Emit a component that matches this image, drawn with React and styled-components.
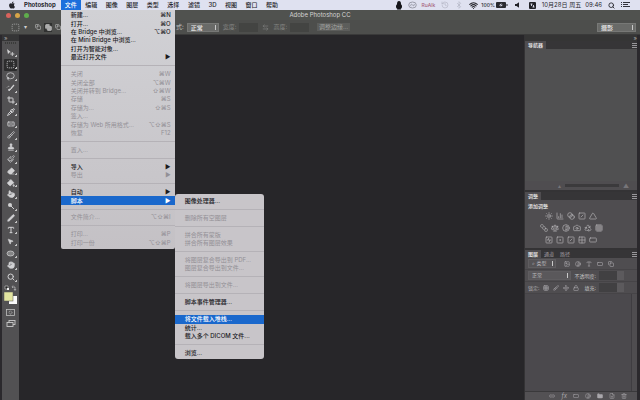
import React from 'react';
import styled, { createGlobalStyle, css } from 'styled-components';
import {
  Sun, ChartColumn, Blend, SquareSlash, Triangle, SquareStack, Scale, Contrast, Camera, Recycle, Grid3x3,
  SquareActivity, SquareDot, Image, Type, RectangleHorizontal, Lock, Brush, Move, Link2, Folder, Trash2,
  FilePlus, SquareDashed, Lasso, Crop, Pipette, Bandage, Paintbrush, Stamp, History, Eraser,
  PaintBucket, Pointer, Pen, Hand, Search, Wifi, Bluetooth, ArrowLeftRight, Copy, MousePointer2, Grid2x2,
} from 'lucide-react';
import { FaApple } from 'react-icons/fa';

const GlobalStyle = createGlobalStyle`
  * { box-sizing: border-box; }
  body {
    margin: 0;
    background: #272628;
    color: #d4d4d4;
    font: 6px/8px Inter, "Noto Sans CJK SC", sans-serif;
    overflow: hidden;
  }
  button, input, select { font: inherit; color: inherit; margin: 0; padding: 0; border: 0; }
  button { background: none; text-align: left; white-space: nowrap; }
  ul { margin: 0; padding: 0; list-style: none; }
  svg { display: block; flex: none; }
`;

const Screen = styled.div`
  display: flex;
  flex-direction: column;
  min-height: 100vh;
`;

/* system menu bar */

const MenuBar = styled.header`
  display: flex;
  align-items: center;
  height: 10px;
  padding: 0 10px 0 8px;
  background: #dfe1f0;
  color: #26262c;
  white-space: nowrap;
`;

const AppName = styled.strong`
  margin: 0 5px 0 8px;
  font-weight: 700;
`;

const Nav = styled.nav`
  display: flex;
  width: 222px;
`;

const NavItem = styled.div`
  position: relative;
  flex: 1 0 auto;
`;

const NavButton = styled.button`
  display: block;
  width: 100%;
  height: 10px;
  padding: 0 4px;
  font-weight: 500;
  ${({ $open }) => $open && css`
    background: #1c6fdc;
    color: #fff;
  `}
`;

const Status = styled.div`
  display: flex;
  align-items: center;
  gap: 6px;
  margin-left: auto;
`;

const StatusGroup = styled.div`
  display: flex;
  align-items: center;
  gap: ${({ $gap }) => $gap || 4}px;
`;

const Small = styled.span`
  color: ${({ $color }) => $color};
  font-size: 5px;
  font-weight: 500;
`;

/* drop-down menus */

const Menu = styled.ul`
  position: absolute;
  z-index: 2;
  top: 100%;
  left: 0;
  display: grid;
  grid-auto-rows: 1fr;
  width: 114px;
  min-height: 239px;
  padding: 1px 0 2px;
  background: linear-gradient(#d1d1d5, #c4c1c5);
  border-radius: 0 0 2px 2px;
  color: #1c1b1f;
`;

const SubMenu = styled(Menu)`
  top: -2px;
  left: 100%;
  width: 89px;
  min-height: 165px;
  padding: 2px 0;
  background: #c8c5c9;
  border-radius: 3px;
`;

const MenuRow = styled.li`
  position: relative;
  display: grid;
  min-height: 8px;
`;

const Divider = styled.li`
  align-self: center;
  height: 1px;
  background: #b5b2b7;
`;

const MenuButton = styled.button`
  display: flex;
  justify-content: space-between;
  align-items: center;
  padding: 0 4px 0 10px;
  font-weight: 500;
  &:disabled { color: #939096; font-weight: 400; }
  ${({ $active }) => $active && css`
    background: #1a68cc;
    color: #fff;
  `}
`;

/* photoshop window */

const TitleBar = styled.h1`
  margin: 0;
  padding: 1px 0;
  background: #50524f;
  font-size: 6px;
  font-weight: 400;
  text-align: center;
  position: relative;
`;

const Lights = styled.div`
  position: absolute;
  top: 3px;
  left: 6px;
  display: flex;
  gap: 4px;
`;

const Light = styled.i`
  width: 5px;
  height: 5px;
  border-radius: 50%;
  background: ${({ $color }) => $color};
`;

const OptionsBar = styled.div`
  display: flex;
  align-items: center;
  height: 15px;
  padding: 0 4px 0 11px;
  background: #4d4e4c;
  border-bottom: 1px solid #3a3a3a;
  color: #d0d0d0;
`;

const ToolOptions = styled.div`
  display: flex;
  align-items: center;
  gap: 4px;
  width: 165px;
`;

const OptionGroup = styled.div`
  display: flex;
  gap: 2px;
  padding-left: 3px;
`;

const Option = styled.button`
  display: grid;
  place-items: center;
  width: 8px;
  height: 9px;
  background: ${({ $on }) => ($on ? '#303130' : 'transparent')};
`;

const Fields = styled.div`
  display: flex;
  align-items: center;
  gap: 4px;
`;

const Field = styled.label`
  display: flex;
  align-items: center;
  gap: 3px;
  color: ${({ $dim }) => ($dim ? '#858684' : '#c4c4c4')};
  white-space: nowrap;
`;

const TextBox = styled.input`
  width: 19px;
  height: 9px;
  background: #434442;
`;

const Select = styled.select`
  appearance: none;
  width: ${({ $width }) => $width}px;
  height: 9px;
  padding-left: 3px;
  border: 1px solid #777876;
  background: linear-gradient(to left, #c9c9c9 1px, transparent 1px) no-repeat calc(100% - 2px) 50% / 2px 5px,
    ${({ $fill }) => $fill || '#696a68'};
  color: #eee;
  font-weight: 500;
  line-height: 7px;
`;

const WorkspaceSelect = styled(Select)`
  margin-left: auto;
`;

const EdgeButton = styled.button`
  width: 33px;
  height: 8px;
  margin-left: 8px;
  background: #5c5d5b;
  color: #a2a3a1;
  text-align: center;
`;

const Workspace = styled.div`
  display: flex;
  flex: 1;
  padding: 0 3px 0 2px;
  background: #2b292d;
`;

const Toolbar = styled.aside`
  width: 17px;
  background: #525153;
`;

const ToolHeader = styled.div`
  height: 6px;
  padding-left: 2px;
  background: #353536;
  color: #aaa;
  line-height: 5px;
`;

const Grip = styled.div`
  height: 2px;
  margin: 1px 3px 3px;
  background: repeating-linear-gradient(90deg, #3a3a3a 0 1px, #515151 1px 2px);
`;

const Tools = styled.div`
  display: grid;
  grid-auto-rows: 1fr;
  min-height: 236px;
`;

const Tool = styled.button`
  display: grid;
  place-items: center;
  margin: 0 2px;
  color: #d2d2d4;
  border-radius: 1px;
  background: linear-gradient(135deg, transparent 50%, #c4c4c4 50%) no-repeat 100% 85% / 2px 2px
    ${({ $on }) => ($on ? ', #2c2c2d' : '')};
`;

const ColorTools = styled.div`
  display: grid;
  justify-items: center;
  gap: 4px;
  padding-top: 1px;
`;

const Canvas = styled.main`
  flex: 1;
  background: #272629;
`;

const Panels = styled.aside`
  display: flex;
  flex-direction: column;
  width: 113px;
  padding-left: 1px;
  background: #343335;
`;

const PanelTop = styled.div`
  height: 6px;
  background: #353535;
  color: #aaa;
  line-height: 5px;
  text-align: right;
`;

const Panel = styled.section`
  display: flex;
  flex-direction: column;
  flex: ${({ $grow }) => ($grow ? '1' : 'none')};
  margin-bottom: ${({ $last }) => ($last ? 0 : 2)}px;
  background: #4f4d50;
`;

const Tabs = styled.div`
  display: flex;
  align-items: center;
  height: 8px;
  background: #363537;
`;

const Tab = styled.button`
  padding: 0 3px;
  height: 8px;
  background: ${({ $on }) => ($on ? '#4f4d50' : 'transparent')};
  color: ${({ $on }) => ($on ? '#eee' : '#a19fa3')};
  font-size: 5px;
  font-weight: ${({ $on }) => ($on ? 500 : 400)};
`;

const PanelMenu = styled.button`
  width: 5px;
  height: 5px;
  margin-left: auto;
  background: repeating-linear-gradient(#99979b 0 1px, transparent 1px 2px);
`;

const Preview = styled.div`
  height: 132px;
  background: #505051;
`;

const ZoomRow = styled.label`
  display: flex;
  justify-content: flex-end;
  align-items: center;
  gap: 4px;
  height: 9px;
  padding-right: 8px;
  color: #777579;
`;

const ZoomSlider = styled.input`
  appearance: none;
  width: 54px;
  height: 3px;
  background: #3b3a3c;
  &::-webkit-slider-thumb { appearance: none; }
`;

const AddTitle = styled.h2`
  margin: 2px 3px;
  font-size: 5px;
  font-weight: 500;
  color: #eee;
`;

const Adjustments = styled.div`
  display: grid;
  justify-items: center;
  gap: 4px;
  padding: 0 20px 4px 0;
`;

const IconRow = styled.div`
  display: flex;
  gap: ${({ $gap }) => $gap || 3}px;
  color: #b5b3b7;
`;

const IconButton = styled.button`
  display: grid;
  place-items: center;
`;

const LayerRow = styled.div`
  display: flex;
  align-items: center;
  gap: 4px;
  height: 12px;
  padding: 0 13px 0 3px;
  border-bottom: 1px solid #464447;
  color: #aeacb0;
  font-size: 5px;
  white-space: nowrap;
`;

const LayerIcons = styled(IconRow)`
  padding-left: ${({ $indent }) => $indent || 0}px;
`;

const LayerField = styled(Field)`
  margin-left: auto;
  input {
    width: 25px;
    background: linear-gradient(90deg, #414042 18px, #5c5a5d 18px);
  }
`;

const LayerSelect = styled(Select)`
  border-color: #5f5d60;
  color: #bcbabe;
  font-weight: 400;
`;

const LayerList = styled.div`
  flex: 1;
  margin-right: 5px;
  background: #4b494d;
  border-right: 1px solid #3f3d41;
`;

const LayerFooter = styled.div`
  display: flex;
  justify-content: flex-end;
  align-items: center;
  gap: 6px;
  height: 9px;
  padding-right: 10px;
  border-top: 1px solid #3a393b;
  background: #535154;
  color: #a9a7ab;
`;

const fileItems = [
  { text: '新建...', keys: '⌘N' },
  { text: '打开...', keys: '⌘O' },
  { text: '在 Bridge 中浏览...', keys: '⌥⌘O' },
  { text: '在 Mini Bridge 中浏览...' },
  { text: '打开为智能对象...' },
  { text: '最近打开文件', keys: '▶' },
  null,
  { text: '关闭', keys: '⌘W', off: true },
  { text: '关闭全部', keys: '⌥⌘W', off: true },
  { text: '关闭并转到 Bridge...', keys: '⇧⌘W', off: true },
  { text: '存储', keys: '⌘S', off: true },
  { text: '存储为...', keys: '⇧⌘S', off: true },
  { text: '签入...', off: true },
  { text: '存储为 Web 所用格式...', keys: '⌥⇧⌘S', off: true },
  { text: '恢复', keys: 'F12', off: true },
  null,
  { text: '置入...', off: true },
  null,
  { text: '导入', keys: '▶' },
  { text: '导出', keys: '▶', off: true },
  null,
  { text: '自动', keys: '▶' },
  { text: '脚本', keys: '▶', active: true, sub: true },
  null,
  { text: '文件简介...', keys: '⌥⇧⌘I', off: true },
  null,
  { text: '打印...', keys: '⌘P', off: true },
  { text: '打印一份', keys: '⌥⇧⌘P', off: true },
];

const scriptItems = [
  { text: '图像处理器...' },
  null,
  { text: '删除所有空图层', off: true },
  null,
  { text: '拼合所有蒙版', off: true },
  { text: '拼合所有图层效果', off: true },
  null,
  { text: '将图层复合导出到 PDF...', off: true },
  { text: '图层复合导出到文件...', off: true },
  null,
  { text: '将图层导出到文件...', off: true },
  null,
  { text: '脚本事件管理器...' },
  null,
  { text: '将文件载入堆栈...', active: true },
  { text: '统计...' },
  { text: '载入多个 DICOM 文件...' },
  null,
  { text: '浏览...' },
];

const MenuItems = ({ items }) => items.map((item, i) => (item ? (
  <MenuRow key={i}>
    <MenuButton disabled={item.off} $active={item.active}>
      <span>{item.text}</span>
      <span>{item.keys}</span>
    </MenuButton>
    {item.sub && <SubMenu><MenuItems items={scriptItems} /></SubMenu>}
  </MenuRow>
) : <Divider key={i} />));

const Penguin = () => (
  <svg width="8" height="9" viewBox="0 0 8 9" fill="#15151a">
    <ellipse cx="4" cy="3" rx="2" ry="3" />
    <ellipse cx="4" cy="5.5" rx="3" ry="2.7" />
    <path d="M2 7.5h4v1H2z" />
  </svg>
);

const Swirl = () => (
  <svg width="9" height="8" viewBox="0 0 9 8" fill="none" stroke="#8a8c98" strokeWidth="0.8">
    <ellipse cx="4.5" cy="4" rx="3.8" ry="3" />
    <path d="M3 5.2c-1-1.6.6-2.6 1.5-1.2s2.4.6 1.6-1" />
  </svg>
);

const Battery = () => (
  <svg width="12" height="6" viewBox="0 0 12 6">
    <rect width="10" height="6" rx="1" fill="#2a2a30" />
    <rect x="10.5" y="2" width="1" height="2" fill="#2a2a30" />
    <path d="M5.6 1 3 3.4h2L4.4 5 7 2.7H5z" fill="#dfe1f0" />
  </svg>
);

const Speaker = () => (
  <svg width="6" height="6" viewBox="0 0 6 6"><path d="M1 2h1.500L5 .3v5.400L2.500 4H1z" fill="#222228" /></svg>
);

const InputSource = () => (
  <svg width="7" height="7" viewBox="0 0 7 7">
    <rect width="7" height="7" rx="1" fill="#222228" />
    <path d="M1.500 2h2M2.500 2v2M3.500 5h2M4.500 3v2" stroke="#dfe1f0" strokeWidth="0.9" />
  </svg>
);

const ListIcon = () => (
  <svg width="9" height="6" viewBox="0 0 9 6" stroke="#33333a" strokeWidth="1">
    <path d="M0 .5h1M2 .5h7M0 2.500h1M2 2.500h5M0 4.500h1M2 4.500h7" />
  </svg>
);

const MoveTool = () => (
  <svg width="9" height="9" viewBox="0 0 9 9" fill="currentColor">
    <path d="M1 1l4 3.200-1.800.3L2 6.200z" />
    <path d="M6.300 4v4M4.300 6h4" stroke="currentColor" strokeWidth="0.9" />
  </svg>
);

const QuickSelectTool = () => (
  <svg width="9" height="9" viewBox="0 0 9 9" stroke="currentColor" fill="none">
    <path d="M8 1 5 4.500" strokeWidth="1.200" />
    <path d="M5.500 4.500 3 7l-.5-1.500z" fill="currentColor" strokeWidth="0.8" />
    <path d="M1 3.500c.5-1 1.500-1.500 2.500-1" strokeWidth="0.7" strokeDasharray="1 0.7" />
  </svg>
);

const DodgeTool = () => (
  <svg width="8" height="8" viewBox="0 0 8 8">
    <circle cx="3" cy="3" r="2" fill="currentColor" />
    <path d="M4 4l3 3" stroke="currentColor" />
  </svg>
);

const EllipseTool = () => (
  <svg width="9" height="7" viewBox="0 0 9 7">
    <ellipse cx="4.500" cy="3.500" rx="3.500" ry="2.500" fill="#858586" stroke="currentColor" strokeWidth="0.7" />
  </svg>
);

const Swatches = () => (
  <svg width="13" height="21" viewBox="0 0 13 21">
    <path d="M1 2h3v3H1z" fill="#222" stroke="#ccc" strokeWidth="0.6" />
    <path d="M3 4h2v2H3z" fill="#eee" />
    <path d="M8.500 3h2.500v3M9 1.500 8 3l1 1M10 5l1 1.500L12 5" fill="none" stroke="#ccc" strokeWidth="0.6" />
    <rect x="5" y="12" width="8" height="8" fill="#fafafa" />
    <rect x="0" y="8" width="9" height="9" fill="#e2e4a0" stroke="#555" strokeWidth="0.5" />
  </svg>
);

const MaskMode = () => (
  <svg width="9" height="7" viewBox="0 0 9 7" fill="none" stroke="#bdbdbd" strokeWidth="0.8">
    <rect x="0.5" y="0.5" width="8" height="6" />
    <circle cx="4.500" cy="3.500" r="1.500" strokeDasharray="1 0.6" />
  </svg>
);

const ScreenMode = () => (
  <svg width="10" height="8" viewBox="0 0 10 8" fill="#525153" stroke="#c9c9c9" strokeWidth="0.9">
    <rect x="3" y="0.5" width="6" height="4" />
    <rect x="1" y="2.500" width="6" height="4" />
  </svg>
);

const tools = [
  ['移动', <MoveTool />],
  ['选框', <SquareDashed size={9} />],
  ['套索', <Lasso size={9} />],
  ['快速选择', <QuickSelectTool />],
  ['裁剪', <Crop size={8} strokeWidth={3} />],
  ['吸管', <Pipette size={8} strokeWidth={3} />],
  ['修复', <Bandage size={8} />],
  ['画笔', <Brush size={8} />],
  ['图章', <Stamp size={8} fill="currentColor" />],
  ['历史记录', <Paintbrush size={8} />],
  ['橡皮擦', <Eraser size={8} fill="currentColor" />],
  ['油漆桶', <PaintBucket size={8} fill="currentColor" />],
  ['涂抹', <Pointer size={8} fill="currentColor" />],
  ['减淡', <DodgeTool />],
  ['钢笔', <Pen size={8} fill="currentColor" />],
  ['文字', <Type size={8} strokeWidth={3} />],
  ['路径选择', <MousePointer2 size={7} fill="currentColor" />],
  ['椭圆', <EllipseTool />],
  ['抓手', <Hand size={8} fill="currentColor" />],
  ['缩放', <Search size={8} strokeWidth={3} />],
];

const adjustments = [
  [Sun, ChartColumn, Blend, SquareSlash, Triangle],
  [SquareStack, Scale, Contrast, Camera, Recycle, Grid3x3],
  [SquareActivity, SquareDot, SquareSlash, Grid2x2, RectangleHorizontal],
];

const SystemBar = () => (
  <MenuBar>
    <FaApple size={8} />
    <AppName>Photoshop</AppName>
    <Nav>
      <NavItem>
        <NavButton $open>文件</NavButton>
        <Menu><MenuItems items={fileItems} /></Menu>
      </NavItem>
      {['编辑', '图像', '图层', '类型', '选择', '滤镜', '3D', '视图', '窗口', '帮助'].map(name => (
        <NavItem key={name}><NavButton>{name}</NavButton></NavItem>
      ))}
    </Nav>
    <Status>
      <StatusGroup $gap={5}>
        <Penguin />
        <Swirl />
        <Small $color="#a8647e">RuAlk</Small>
      </StatusGroup>
      <History size={8} color="#b3b5c4" />
      <Bluetooth size={8} color="#b3b5c4" />
      <StatusGroup $gap={3}>
        <Wifi size={9} strokeWidth={3} />
        <StatusGroup $gap={1}><Small>100%</Small> <Battery /></StatusGroup>
      </StatusGroup>
      <StatusGroup $gap={9}>
        <Speaker />
        <InputSource />
      </StatusGroup>
      <StatusGroup>
        <span>10月28日 周五</span>
        <span>09:46</span>
      </StatusGroup>
      <Search size={7} strokeWidth={3} />
      <ListIcon />
    </Status>
  </MenuBar>
);

const Options = () => (
  <OptionsBar>
    <ToolOptions>
      <SquareDashed size={9} color="#aaa" />
      <span>▾</span>
      <OptionGroup>
        <Option aria-label="新选区"><Copy size={6} /></Option>
        <Option aria-label="添加到选区" $on><Copy size={7} fill="#aaa" /></Option>
        <Option aria-label="从选区减去"><Copy size={6} /></Option>
      </OptionGroup>
    </ToolOptions>
    <Fields>
      <Field>
        式:
        <Select $width={32}><option>正常</option></Select>
      </Field>
      <Field $dim>宽度:<TextBox /></Field>
      <ArrowLeftRight size={7} color="#858684" />
      <Field $dim>高度:<TextBox /></Field>
    </Fields>
    <EdgeButton>调整边缘...</EdgeButton>
    <WorkspaceSelect $width={39} aria-label="工作区"><option>摄影</option></WorkspaceSelect>
  </OptionsBar>
);

const LayersPanel = () => (
  <Panel $grow $last>
    <Tabs>
      <Tab $on>图层</Tab>
      <Tab>通道</Tab>
      <Tab>路径</Tab>
      <PanelMenu aria-label="图层菜单" />
    </Tabs>
    <LayerRow>
      <LayerSelect $width={28} $fill="#555356" aria-label="类型"><option>⌕ 类型</option></LayerSelect>
      <LayerIcons $gap={5} $indent={4}>
        <Image size={6} />
        <Contrast size={6} />
        <Type size={6} />
        <RectangleHorizontal size={6} />
        <Copy size={6} />
      </LayerIcons>
    </LayerRow>
    <LayerRow>
      <LayerSelect $width={46} $fill="#5a585b" aria-label="混合模式"><option>正常</option></LayerSelect>
      <LayerField>不透明度:<TextBox /></LayerField>
    </LayerRow>
    <LayerRow>
      <span>锁定:</span>
      <LayerIcons $gap={4}>
        <Grid3x3 size={6} />
        <Brush size={6} />
        <Move size={6} />
        <Lock size={6} />
      </LayerIcons>
      <LayerField>填充:<TextBox /></LayerField>
    </LayerRow>
    <LayerList />
    <LayerFooter>
      <Link2 size={6} />
      <i>fx</i>
      <RectangleHorizontal size={6} />
      <Contrast size={6} />
      <Folder size={6} fill="currentColor" />
      <FilePlus size={6} />
      <Trash2 size={6} />
    </LayerFooter>
  </Panel>
);

const App = () => (
  <Screen>
    <GlobalStyle />
    <SystemBar />
    <TitleBar>
      <Lights>
        <Light $color="#d9635c" />
        <Light $color="#d6a548" />
        <Light $color="#5fae4c" />
      </Lights>
      Adobe Photoshop CC
    </TitleBar>
    <Options />
    <Workspace>
      <Toolbar>
        <ToolHeader>»</ToolHeader>
        <Grip />
        <Tools>
          {tools.map(([name, icon], i) => (
            <Tool key={name} aria-label={name} $on={i === 1}>{icon}</Tool>
          ))}
        </Tools>
        <ColorTools>
          <Swatches />
          <MaskMode />
          <ScreenMode />
        </ColorTools>
      </Toolbar>
      <Canvas />
      <Panels>
        <PanelTop>»</PanelTop>
        <Panel>
          <Tabs>
            <Tab $on>导航器</Tab>
            <PanelMenu aria-label="导航器菜单" />
          </Tabs>
          <Preview />
          <ZoomRow>▴<ZoomSlider type="range" aria-label="缩放" />▲</ZoomRow>
        </Panel>
        <Panel>
          <Tabs>
            <Tab $on>调整</Tab>
            <PanelMenu aria-label="调整菜单" />
          </Tabs>
          <AddTitle>添加调整</AddTitle>
          <Adjustments>
            {adjustments.map((row, i) => (
              <IconRow key={i}>
                {row.map((Icon, j) => <IconButton key={j} aria-label="调整图层"><Icon size={8} /></IconButton>)}
              </IconRow>
            ))}
          </Adjustments>
        </Panel>
        <LayersPanel />
      </Panels>
    </Workspace>
  </Screen>
);

export default App;
